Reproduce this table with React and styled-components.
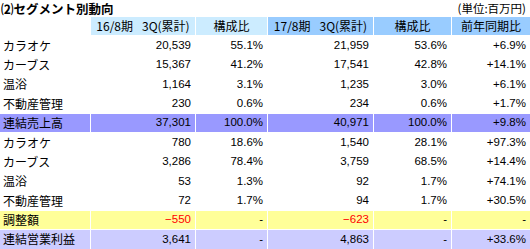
import React from 'react';
import styled, { createGlobalStyle } from 'styled-components';

const GlobalStyle = createGlobalStyle`
    body {
        margin: 0;
        background: #ffffff;
        font-family: "Noto Sans CJK JP", sans-serif;
        color: #000000;
    }
`;

const Page = styled.div`
    width: 530px;
    height: 249px;
    overflow: hidden;
`;

const TitleBar = styled.div`
    height: 17px;
    display: flex;
    justify-content: space-between;
    align-items: flex-start;
`;

const Title = styled.h2`
    margin: 0;
    padding-left: 1px;
    font-size: 12.5px;
    font-weight: bold;
    line-height: 17px;
    white-space: nowrap;
`;

const Unit = styled.span`
    flex-shrink: 0;
    font-size: 11.5px;
    line-height: 17px;
    padding-right: 4px;
    white-space: nowrap;
`;

const Grid = styled.div`
    display: grid;
    grid-template-columns: 90px 104px 71px 105px 77px 78px;
    grid-auto-rows: 18.4px;
    gap: 1px;
`;

const rowColors = {
    total: '#9999ff',
    adjust: '#ffff99',
    profit: '#ccccff',
};

const Cell = styled.div`
    display: flex;
    align-items: center;
    justify-content: ${p => (p.$label ? 'flex-start' : 'flex-end')};
    padding: ${p => (p.$label ? '0 0 0 3px' : '0 4px 0 0')};
    background: ${p => rowColors[p.$kind] || 'transparent'};
    color: ${p => (p.$red ? '#ff0000' : '#000000')};
    font-family: ${p => (p.$label ? '"Noto Sans CJK JP", sans-serif' : '"Liberation Sans", "Noto Sans CJK JP", sans-serif')};
    font-size: ${p => (p.$label ? '12px' : '11.5px')};
    line-height: 1;
    white-space: nowrap;
`;

const HeadCell = styled.div`
    display: flex;
    align-items: center;
    justify-content: center;
    gap: ${p => (p.$gap ? '9px' : '0')};
    background: ${p => (p.$light ? '#ccecff' : '#99ccff')};
    font-size: 12px;
    line-height: 1;
    white-space: nowrap;
`;

const rows = [
    { label: 'カラオケ', v: ['20,539', '55.1%', '21,959', '53.6%', '+6.9%'] },
    { label: 'カーブス', v: ['15,367', '41.2%', '17,541', '42.8%', '+14.1%'] },
    { label: '温浴', v: ['1,164', '3.1%', '1,235', '3.0%', '+6.1%'] },
    { label: '不動産管理', v: ['230', '0.6%', '234', '0.6%', '+1.7%'] },
    { label: '連結売上高', kind: 'total', v: ['37,301', '100.0%', '40,971', '100.0%', '+9.8%'] },
    { label: 'カラオケ', v: ['780', '18.6%', '1,540', '28.1%', '+97.3%'] },
    { label: 'カーブス', v: ['3,286', '78.4%', '3,759', '68.5%', '+14.4%'] },
    { label: '温浴', v: ['53', '1.3%', '92', '1.7%', '+74.1%'] },
    { label: '不動産管理', v: ['72', '1.7%', '94', '1.7%', '+30.5%'] },
    { label: '調整額', kind: 'adjust', red: [0, 2], v: ['−550', '-', '−623', '-', '-'] },
    { label: '連結営業利益', kind: 'profit', v: ['3,641', '-', '4,863', '-', '+33.6%'] },
];

const App = () => {
    return (
        <>
            <GlobalStyle />
            <Page>
                <TitleBar>
                    <Title>⑵セグメント別動向</Title>
                    <Unit>(単位:百万円)</Unit>
                </TitleBar>
                <Grid>
                    <div />
                    <HeadCell $light $gap><span>16/8期</span><span>3Q(累計)</span></HeadCell>
                    <HeadCell $light>構成比</HeadCell>
                    <HeadCell $gap><span>17/8期</span><span>3Q(累計)</span></HeadCell>
                    <HeadCell>構成比</HeadCell>
                    <HeadCell>前年同期比</HeadCell>
                    {rows.map((row, i) => (
                        <React.Fragment key={i}>
                            <Cell $label $kind={row.kind}>{row.label}</Cell>
                            {row.v.map((val, j) => (
                                <Cell key={j} $kind={row.kind} $red={row.red && row.red.includes(j)}>{val}</Cell>
                            ))}
                        </React.Fragment>
                    ))}
                </Grid>
            </Page>
        </>
    );
};

export default App;
